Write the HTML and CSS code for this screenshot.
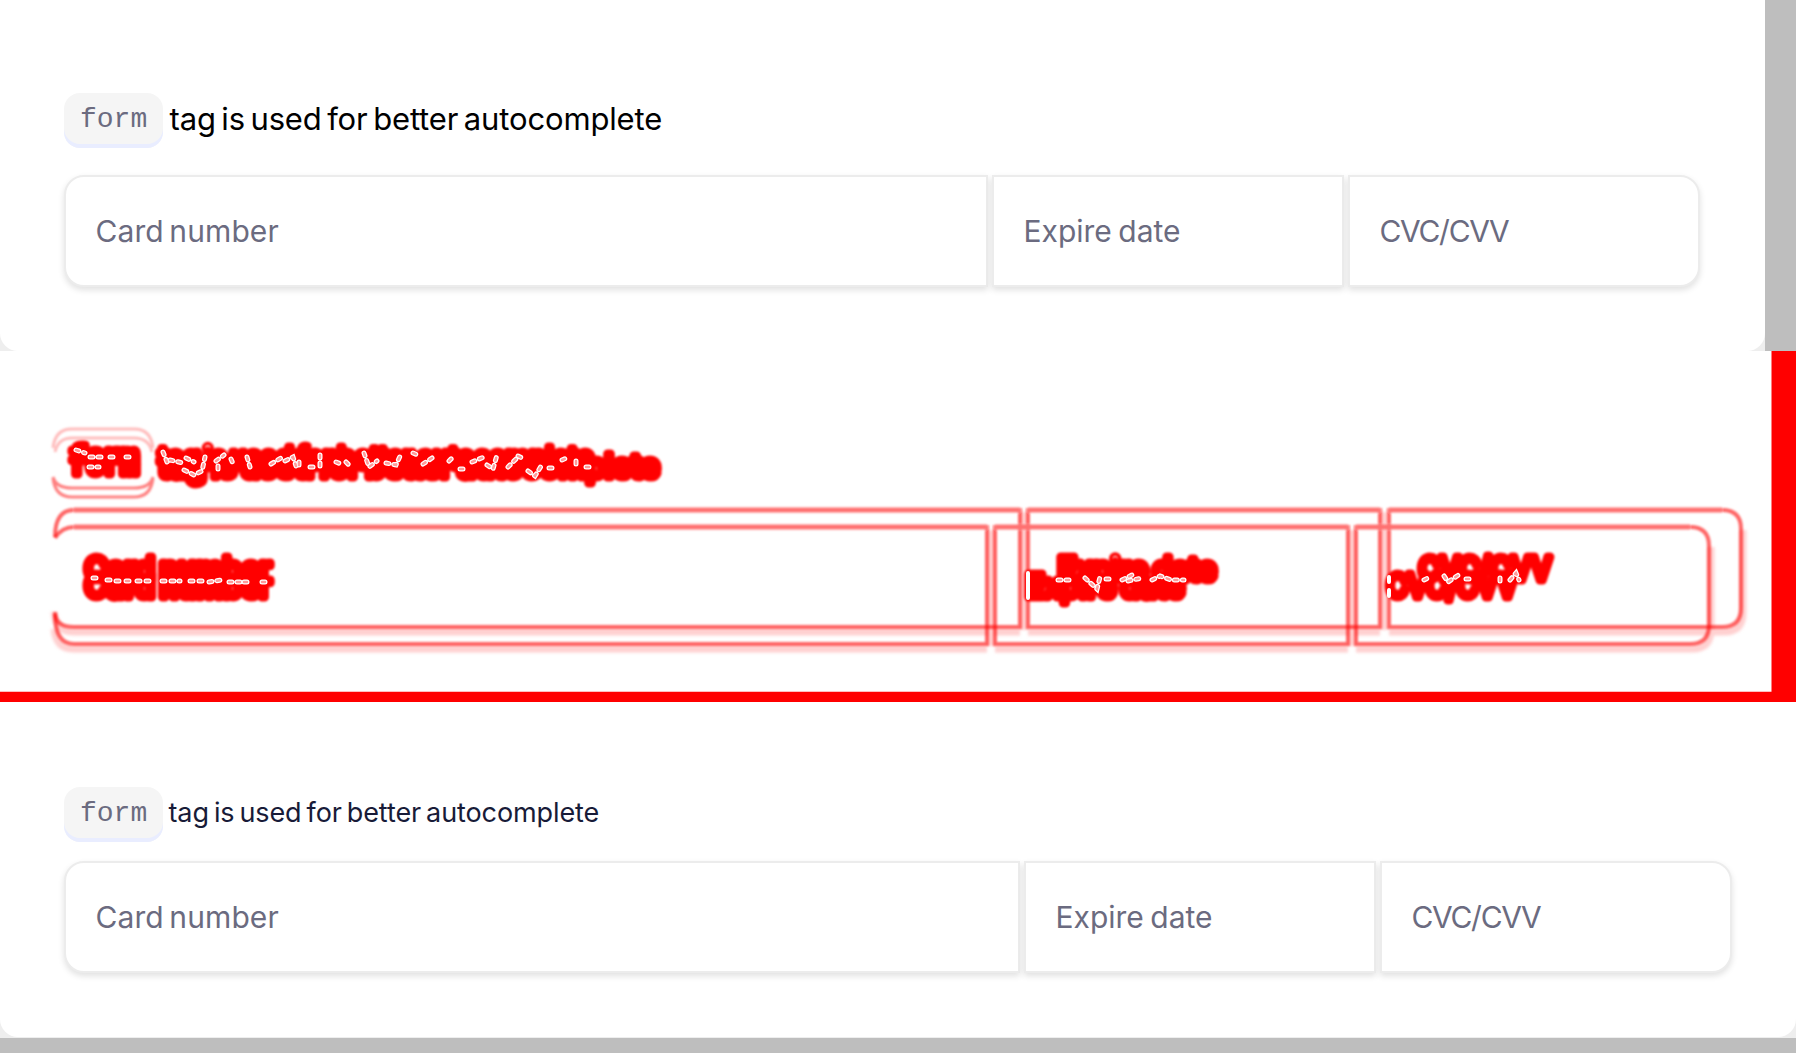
FILE: index.html
```html
<!DOCTYPE html>
<html lang="en">
<head>
<meta charset="utf-8">
<title>Card form comparison</title>
<link rel="stylesheet" href="styles.css">
</head>
<body>
<section class="panel before">
  <div class="card">
    <p class="title"><code>form</code><span class="caption">tag is used for better autocomplete</span></p>
    <div class="fields"><div class="field"><span class="number">Card number</span></div><div class="field"><span class="expiry">Expire date</span></div><div class="field"><span class="cvc">CVC/CVV</span></div></div>
  </div>
</section>
<section class="panel diff">
<svg class="changes" width="1796" height="351" viewBox="0 351 1796 351">
  <defs>
    <filter id="soft" x="-5%" y="-20%" width="110%" height="140%"><feGaussianBlur stdDeviation="0.8"/></filter>
    <filter id="wide" x="-5%" y="-20%" width="110%" height="140%"><feGaussianBlur stdDeviation="1.8"/></filter>
  </defs>
  <path class="solid" d="M1771.5 351h24.5v351H0v-10.300h1771.500z"/>
  <g class="shade" filter="url(#wide)">
    <path d="M54 612q2 20 19 20H1020M1028 632H1380M1389 632H1724q19 0 19-20V530"/>
    <path d="M54 629q2 20 19 20H987M995 649H1348M1356 649H1692q19 0 19-20V547"/>
    <path d="M1024 512V630M1384 512V630M991 530V646M1352 530V646"/>
  </g>
  <g class="pill" filter="url(#soft)">
    <path d="M53 448q2-19 19-19H134q17 0 19 19M55 452q3-14 17-14H134q15 0 18 14"/>
    <path class="strong" d="M53 477q3 11 19 11H134q16 0 19-11M53 478q2 19 19 19H134q17 0 19-19"/>
  </g>
  <g class="outline" filter="url(#soft)">
    <path d="M55 537q0-27 19-27H1020V627H74q-19 0-19-15M1028 510H1380V627H1028zM1389 510H1722q19 0 19 19V608q0 19-19 19H1389z"/>
    <path d="M55 538q7-11 19-11H987V644H74q-19 0-19-30M995 527H1348V644H995zM1356 527H1690q19 0 19 19V625q0 19-19 19H1356z"/>
    <path class="tops" d="M74 510H1020M1028 510H1380M1389 510H1722M74 527H987M995 527H1348M1356 527H1690"/>
  </g>
  <g class="marks" filter="url(#soft)">
    <text class="mono" x="70" y="465" textLength="68" lengthAdjust="spacingAndGlyphs">form</text>
    <text class="mono" x="70" y="474" textLength="68" lengthAdjust="spacingAndGlyphs">form</text>
    <text class="small" x="159" y="468" textLength="434" lengthAdjust="spacingAndGlyphs">tag is used for better autocomplete</text>
    <text x="159" y="477" textLength="500" lengthAdjust="spacingAndGlyphs">tag is used for better autocomplete</text>
    <text x="85" y="580" textLength="186" lengthAdjust="spacingAndGlyphs">Card number</text>
    <text x="85" y="597" textLength="186" lengthAdjust="spacingAndGlyphs">Card number</text>
    <text x="1058" y="580" textLength="158" lengthAdjust="spacingAndGlyphs">Expire date</text>
    <text x="1026" y="597" textLength="158" lengthAdjust="spacingAndGlyphs">Expire date</text>
    <text x="1419" y="580" textLength="132" lengthAdjust="spacingAndGlyphs">CVC/CVV</text>
    <text x="1387" y="597" textLength="130" lengthAdjust="spacingAndGlyphs">CVC/CVV</text>
  </g>
  <g class="speck">
    <path id="s1" d="M76 450l9 3M90 457h11M89 467h10M110 457h4M126 457h8M163 452l4 10M170 460l13 3M186 458l8 4M184 470l10 5 8-4 3-14M216 461l8-6M218 466v4M231 459l3 7M247 457l3 10M271 464l10-6M285 461l8-4 3 9M299 462v6M310 467h7M320 455v11M336 462l5 2M346 462l4 4M364 453l5 14 8-6M386 463l10 2 5-11M413 453l7 3M423 464l9-6M449 461l5-5M460 469h5M472 462l12-5M487 465l6 4 4-14M508 467l8-8M518 456l6 3M528 471l7 5 8-13M549 468h4M562 460l7-3M576 461v7M586 467h8"/>
    <path id="s2" d="M93 578h6M107 580h6M116 581h6M126 581h4M137 581h4M146 581h4M162 581h7M171 581h9M190 581h4M199 581h8M209 582l12-2M229 582h5M237 582h4M244 582h5M262 582h5M1058 580h16M1085 578l12 11 3-12M1106 579h5M1122 580l10-5M1128 581l14-3M1152 580l8-4 11 4 13 0M1424 580l4-2M1444 576l4 6 12-8M1466 579h7M1500 578v3M1510 580l6-7 3 7"/>
    <g class="core"><use href="#s1"/><use href="#s2"/></g>
    <path class="edge" d="M1028 573v25M1389 577v5M1389 590v6"/>
  </g>
</svg>
</section>
<section class="panel after">
  <div class="card">
    <p class="title"><code>form</code><span class="caption">tag is used for better autocomplete</span></p>
    <div class="fields"><div class="field"><span class="number">Card number</span></div><div class="field"><span class="expiry">Expire date</span></div><div class="field"><span class="cvc">CVC/CVV</span></div></div>
  </div>
</section>
</body>
</html>
```
FILE: styles.css
```css
* { box-sizing: border-box; }
body { margin: 0; background: #fff; font-family: Inter, "Liberation Sans", sans-serif; }
.panel { height: 351px; overflow: hidden; background: #bebebe; }
.card { height: 351px; width: 1765px; background: #fff; padding: 93px 65px 0 64px; border-radius: 0 0 18px 18px; }
.before { background: linear-gradient(90deg, #eee 1765px, #bebebe 1765px); }
.after { background: linear-gradient(#eee 336px, #bebebe 336px); }
.after .card { width: 1796px; height: 335px; padding: 85px 64px 0; }
.title { display: flex; height: 55px; margin: 0 0 27px; }
.after .title { margin-bottom: 19px; }
code { width: 98.5px; height: 55px; padding-left: 16px; background: #f5f5f5; border-radius: 16px; box-shadow: inset 0 -4px #e9edff; color: #6b6b80; font: 28px/54px "Liberation Mono", monospace; }
.caption { margin-left: 7px; color: #000; font-size: 31px; font-weight: 400; line-height: 51px; white-space: nowrap; letter-spacing: -.15px; word-spacing: -3px; }
.after .caption { margin-left: 6px; color: #181b38; font-size: 27px; letter-spacing: -.1px; line-height: 52px; word-spacing: -2.5px; }
.fields { display: grid; grid-template-columns: 1fr 352px 352px; gap: 4px; height: 112px; }
.field { border: 2px solid #ececec; background: #fff; box-shadow: 0 3px 6px rgba(0,0,0,.12); padding: 0 29.5px; font-size: 30px; line-height: 108px; color: #6b6b80; white-space: nowrap; }
.number { letter-spacing: .1px; word-spacing: -3px; }
.expiry { letter-spacing: 0; word-spacing: -2px; }
.cvc { letter-spacing: -1.3px; }
.field:first-child { border-radius: 20px 0 0 20px; }
.field:last-child { border-radius: 0 20px 20px 0; }
.diff { background: #fff; }
.changes { display: block; }
.solid { fill: #f00; }
.shade, .pill, .outline { fill: none; }
.shade { stroke: #ffd0d0; stroke-width: 7; }
.pill { stroke: #ffbcbc; stroke-width: 3; }
.strong { stroke: #ff8080; }
.outline { stroke: #f00; stroke-opacity: .6; stroke-width: 4; }
.outline .tops { stroke: #ff7070; stroke-opacity: 1; stroke-width: 5; }
.marks { fill: #f00; stroke: #f00; stroke-width: 9; stroke-linejoin: round; font-size: 31px; word-spacing: -3px; }
.marks .small { font-size: 28px; }
.marks .mono { font-family: "Liberation Mono", monospace; font-size: 28px; }
.speck { fill: none; stroke: #fff; stroke-width: 5; stroke-linecap: round; stroke-dasharray: 3 5; }
.core { stroke: #ff9a9a; stroke-width: 2.5; }
.edge { stroke-width: 4; stroke-dasharray: none; }
```
